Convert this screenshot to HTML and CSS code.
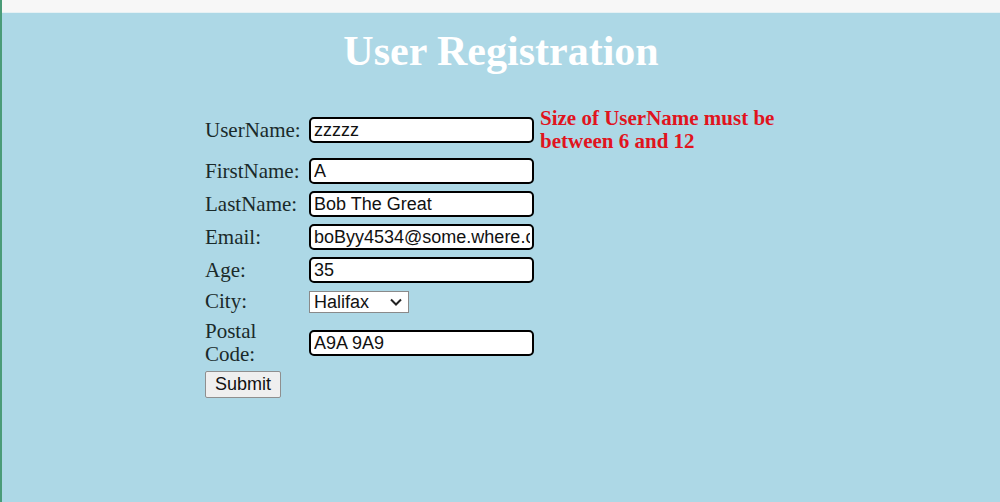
FILE: index.html
```html
<!DOCTYPE html>
<html>
<head>
<meta charset="utf-8">
<title>User Registration</title>
<link rel="stylesheet" href="styles.css">
</head>
<body>
<div class="topbar"></div>
<main class="page">
  <h1 class="title">User Registration</h1>
  <form class="form">
    <label class="lbl" for="un">UserName:</label>
    <input class="field" id="un" type="text" value="zzzzz">
    <div class="error">Size of UserName must be between 6 and 12</div>

    <label class="lbl" for="fn">FirstName:</label>
    <input class="field" id="fn" type="text" value="A">
    <div></div>

    <label class="lbl" for="ln">LastName:</label>
    <input class="field" id="ln" type="text" value="Bob The Great">
    <div></div>

    <label class="lbl" for="em">Email:</label>
    <input class="field" id="em" type="text" value="boByy4534@some.where.com">
    <div></div>

    <label class="lbl" for="ag">Age:</label>
    <input class="field" id="ag" type="text" value="35">
    <div></div>

    <label class="lbl" for="ci">City:</label>
    <div class="selwrap">
      <select class="sel" id="ci">
        <option>Halifax</option>
      </select>
      <svg class="chev" width="14" height="10" viewBox="0 0 14 10"><path d="M2 2.5 L7 7.5 L12 2.5" fill="none" stroke="#222" stroke-width="2"/></svg>
    </div>
    <div></div>

    <label class="lbl two" for="pc">Postal Code:</label>
    <input class="field" id="pc" type="text" value="A9A 9A9">
    <div></div>

    <div class="btnrow"><button class="btn" type="button">Submit</button></div>
  </form>
</main>
</body>
</html>
```
FILE: styles.css
```css
html, body {
  margin: 0;
  padding: 0;
  height: 100%;
}
body {
  background: #add8e6;
  font-family: "Liberation Serif", "Times New Roman", serif;
  border-left: 2px solid #4a9c78;
  box-sizing: border-box;
  overflow: hidden;
}
.topbar {
  height: 12px;
  background: #f7f7f7;
  border-bottom: 1px solid #e6f1f4;
}
.page {
  display: flex;
  flex-direction: column;
  align-items: center;
}
.title {
  margin: 14px 0 0 0;
  font-size: 42px;
  line-height: 48px;
  font-weight: bold;
  color: #ffffff;
}
.form {
  margin: 34px 0 0 0;
  align-self: flex-start;
  margin-left: 201px;
  display: grid;
  grid-template-columns: 106px 225px 260px;
  column-gap: 0;
  row-gap: 7px;
  align-items: center;
}
.lbl {
  font-size: 21px;
  line-height: 23px;
  color: #1a2a2a;
  padding-left: 2px;
}
.lbl.two {
  width: 70px;
}
.field {
  box-sizing: border-box;
  width: 225px;
  height: 26px;
  margin: 0;
  border: 2px solid #000;
  border-radius: 5px;
  padding: 0 2px 0 3px;
  font-family: "Liberation Sans", Arial, sans-serif;
  font-size: 18px;
  color: #111;
  background: #fff;
  outline: none;
}
.error {
  font-size: 21px;
  line-height: 23px;
  margin: -2px 0;
  font-weight: bold;
  color: #e0141e;
  padding-left: 6px;
}
.selwrap {
  position: relative;
  width: 100px;
  height: 22px;
}
.sel {
  box-sizing: border-box;
  appearance: none;
  -webkit-appearance: none;
  width: 100px;
  height: 22px;
  margin: 0;
  border: 1px solid #8a8a8a;
  border-radius: 0;
  background: #fff;
  padding: 0 0 0 4px;
  font-family: "Liberation Sans", Arial, sans-serif;
  font-size: 18px;
  color: #111;
}
.chev {
  position: absolute;
  right: 6px;
  top: 6px;
  pointer-events: none;
}
.btnrow {
  grid-column: 1 / span 3;
  padding-left: 2px;
  margin-top: -2px;
}
.btn {
  box-sizing: border-box;
  width: 76px;
  height: 27px;
  margin: 0;
  padding: 0;
  background: #efefef;
  border: 1px solid #8f8f8f;
  border-radius: 2px;
  font-family: "Liberation Sans", Arial, sans-serif;
  font-size: 18px;
  color: #111;
}
```
